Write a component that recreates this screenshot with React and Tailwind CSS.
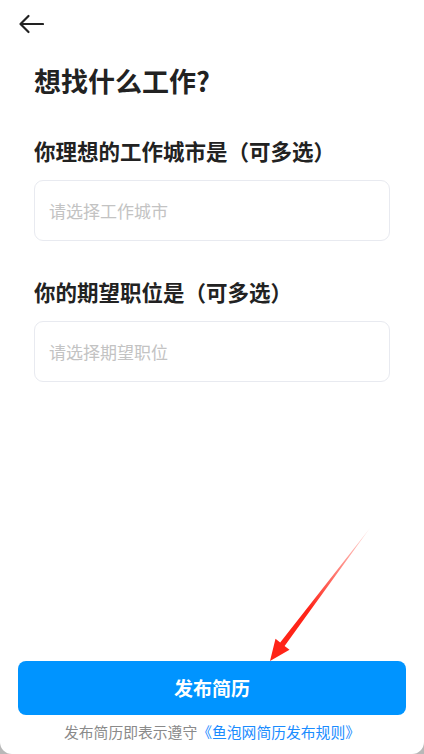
export default function App() {
  const font = { fontFamily: '"Noto Sans CJK SC", "Noto Sans", sans-serif' };
  return (
    <div className="w-[424px] h-[754px] bg-[#b8b8b8]" style={font}>
      <div className="relative flex h-full w-full flex-col rounded-b-[12px] bg-white">
        <div className="flex h-[48px] items-center pl-[18px]">
          <svg width="26" height="20" viewBox="0 0 26 20" fill="none">
            <path d="M25 10H3" stroke="#222" strokeWidth="2.2" strokeLinecap="round" />
            <path d="M10.5 2L2.5 10L10.5 18" stroke="#222" strokeWidth="2.2" strokeLinecap="round" strokeLinejoin="round" />
          </svg>
        </div>
        <div className="mt-[16px] h-[34px] px-[34px] text-[27px] font-bold leading-[34px] text-[#222]">
          想找什么工作?
        </div>
        <div className="mt-[38px] h-[30px] px-[34px] text-[21.5px] font-bold leading-[30px] text-[#222]">
          你理想的工作城市是（可多选）
        </div>
        <div className="mx-[34px] mt-[14px] flex h-[61px] items-center rounded-[9px] border border-[#e8eaf0] px-[14px] text-[17px] text-[#c3c3c3]">
          请选择工作城市
        </div>
        <div className="mt-[36px] h-[30px] px-[34px] text-[21.5px] font-bold leading-[30px] text-[#222]">
          你的期望职位是（可多选）
        </div>
        <div className="mx-[34px] mt-[14px] flex h-[61px] items-center rounded-[9px] border border-[#e8eaf0] px-[14px] text-[17px] text-[#c3c3c3]">
          请选择期望职位
        </div>
        <div className="mt-auto mx-[18px] flex h-[54px] items-center justify-center rounded-[8px] bg-[#0094ff] text-[19px] font-bold text-white">
          发布简历
        </div>
        <div className="mt-[5px] mb-[10px] h-[24px] text-center text-[14.8px] leading-[24px] text-[#8a8a8a]">
          发布简历即表示遵守<span className="text-[#1a8cff]">《鱼泡网简历发布规则》</span>
        </div>
        <svg className="pointer-events-none absolute left-0 top-0" width="424" height="754" viewBox="0 0 424 754">
          <defs>
            <linearGradient id="ag" x1="370" y1="528" x2="310" y2="610" gradientUnits="userSpaceOnUse">
              <stop offset="0" stopColor="#ff3020" stopOpacity="0.15" />
              <stop offset="1" stopColor="#ff2418" stopOpacity="1" />
            </linearGradient>
          </defs>
          <polygon
            points="370,528 284.6,646 289.5,649.7 270,661 275.5,638.7 280.2,642.6"
            fill="url(#ag)"
          />
        </svg>
      </div>
    </div>
  );
}
